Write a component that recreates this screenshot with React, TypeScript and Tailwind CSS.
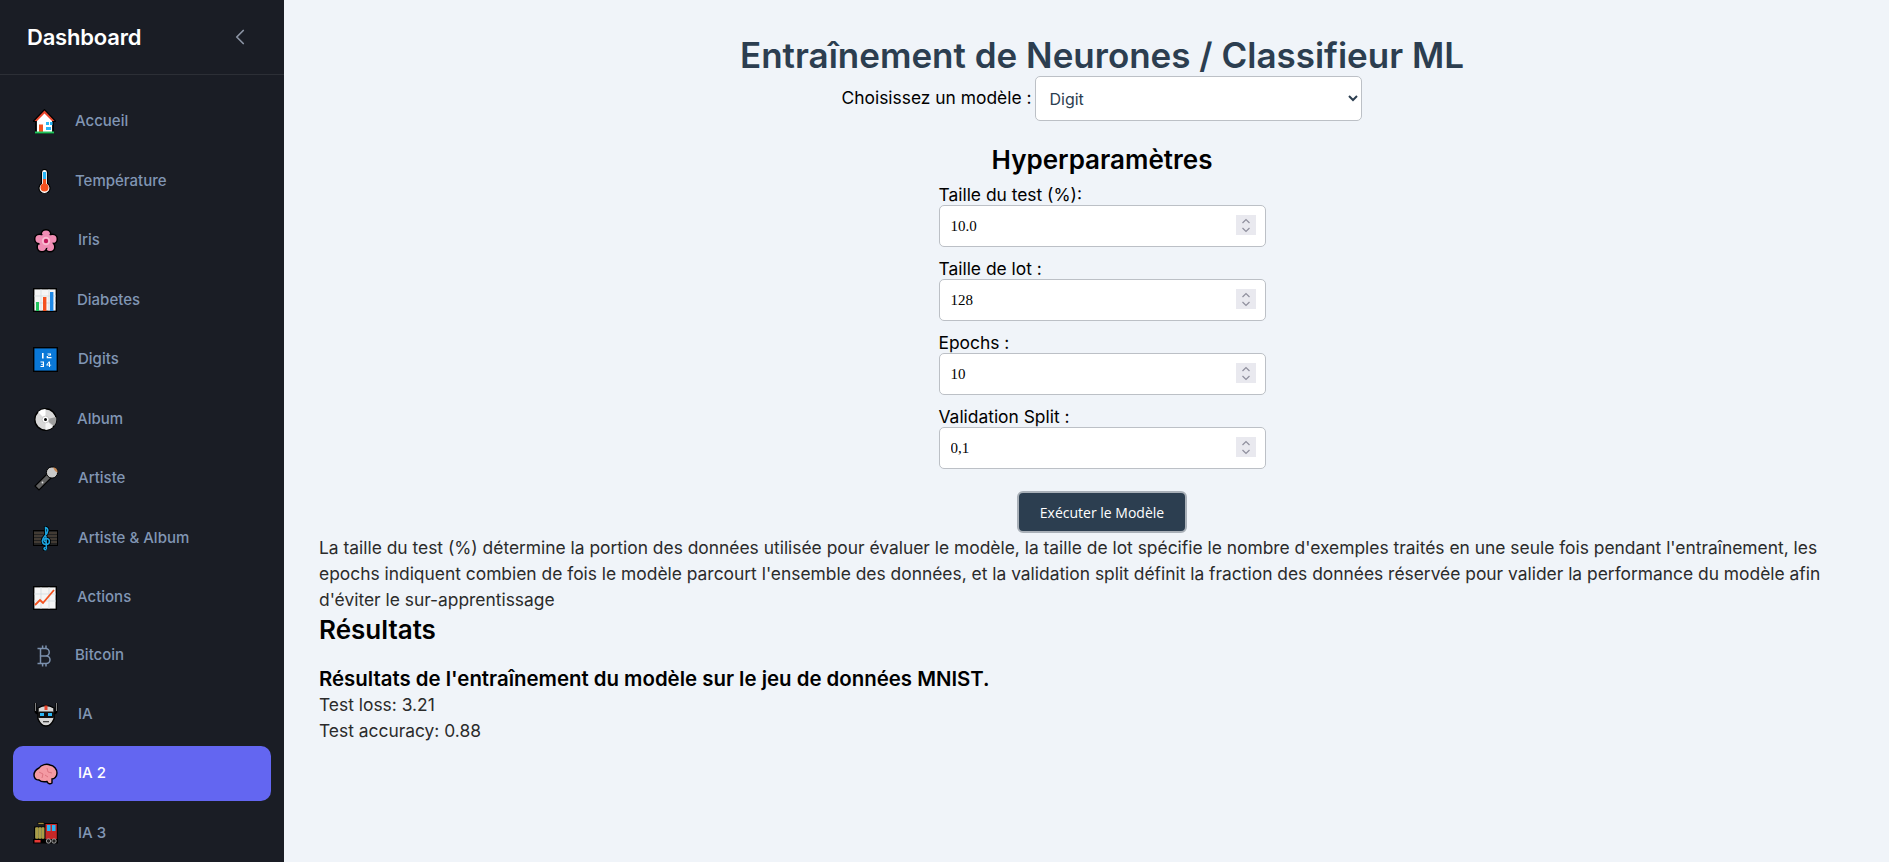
import React from "react";
import { ChevronLeft } from "lucide-react";

const House = () => (
  <svg width="23" height="25" viewBox="0 0 23 25">
    <path d="M11.5 1 L22 12 L20 12 L20 24 L3 24 L3 12 L1 12 Z" fill="#fff" stroke="#000" strokeWidth="1.8" />
    <path d="M11.5 1.5 L21.5 12 L19 12 L11.5 4.5 L4 12 L1.5 12 Z" fill="#e8452c" />
    <rect x="6" y="15.5" width="4" height="7.5" fill="#f4511e" />
    <rect x="13" y="13" width="3" height="3" fill="#29b6f6" />
    <rect x="17" y="13" width="2.5" height="3" fill="#29b6f6" />
    <rect x="13" y="18" width="5" height="3" fill="#29b6f6" />
    <rect x="2" y="22.5" width="19" height="2" fill="#22c55e" />
  </svg>
);
const Thermo = () => (
  <svg width="13" height="24" viewBox="0 0 13 24">
    <path d="M3.5 14.5 V3.5 a3 3 0 0 1 6 0 V14.5 a5.5 5.5 0 1 1 -6 0 Z" fill="#fff" stroke="#000" strokeWidth="1.2" />
    <rect x="5" y="3" width="3" height="7" fill="#29b6f6" />
    <rect x="5" y="10" width="3" height="7" fill="#f4511e" />
    <circle cx="6.5" cy="18.5" r="4" fill="#f4511e" />
  </svg>
);
const Flower = () => (
  <svg width="24" height="24" viewBox="0 0 24 24">
    <g stroke="#000" strokeWidth="1.5" fill="#f08db4">
      <circle cx="12" cy="5.5" r="4.8" />
      <circle cx="18.5" cy="10" r="4.8" />
      <circle cx="16" cy="18" r="4.8" />
      <circle cx="8" cy="18" r="4.8" />
      <circle cx="5.5" cy="10" r="4.8" />
    </g>
    <circle cx="12" cy="12" r="7" fill="#f08db4" />
    <circle cx="12" cy="12" r="4.2" fill="#f8bbd0" />
    <circle cx="12" cy="12" r="2.2" fill="#c2185b" />
  </svg>
);
const Bars = () => (
  <svg width="24" height="24" viewBox="0 0 24 24">
    <rect x="0.7" y="0.7" width="22.6" height="22.6" fill="#f5f5f5" stroke="#000" strokeWidth="1.4" />
    <path d="M1 8h22M1 15h22M8 1v22M16 1v22" stroke="#cfd8dc" strokeWidth="0.7" />
    <rect x="3" y="14" width="3" height="9" fill="#22c55e" />
    <rect x="10" y="9" width="3.4" height="14" fill="#f4511e" />
    <rect x="17" y="4" width="3.4" height="19" fill="#1e88e5" />
  </svg>
);
const Digits = () => (
  <svg width="25" height="25" viewBox="0 0 25 25">
    <rect x="0.7" y="0.7" width="23.6" height="23.6" fill="#0a78d8" stroke="#000" strokeWidth="1.4" />
    <rect x="9" y="6" width="1.6" height="5.5" fill="#fff" />
    <path d="M14.5 6.5h3.5v2h-3v1.5h3.5v1.2h-4.8V9h3V7.6h-2.2z" fill="#fff" />
    <path d="M7.5 14.5h3.5v5.5H7.5v-1h2.3v-1.2H8v-.9h1.8v-1.3H7.5z" fill="#fff" />
    <path d="M17 14.5v3.2h1.2v.9H17V20h-1v-1.4h-2.6v-.9l2.4-3.2zM14.5 17.7H16v-2z" fill="#fff" />
  </svg>
);
const Disc = () => (
  <svg width="23" height="23" viewBox="0 0 23 23">
    <circle cx="11.5" cy="11.5" r="10.7" fill="#d8d8d8" stroke="#000" strokeWidth="1.4" />
    <path d="M11.5 11.5 L4 4 A10.5 10.5 0 0 1 11.5 1 Z" fill="#fff" />
    <path d="M11.5 11.5 L19 19 A10.5 10.5 0 0 1 11.5 22 Z" fill="#f5f5f5" />
    <path d="M11.5 11.5 L22 9 A10.5 10.5 0 0 1 20 18 Z" fill="#9e9e9e" />
    <circle cx="11.5" cy="11.5" r="3.4" fill="#fff" stroke="#bdbdbd" strokeWidth="0.8" />
    <circle cx="11.5" cy="11.5" r="1.5" fill="#000" />
  </svg>
);
const Mic = () => (
  <svg width="25" height="25" viewBox="0 0 25 25">
    <path d="M14 7 L18 11 L5 24 L1 20 Z" fill="#616161" stroke="#000" strokeWidth="1.2" />
    <circle cx="8.5" cy="16.5" r="0.9" fill="#e0e0e0" />
    <circle cx="18" cy="6.5" r="5.6" fill="#c9c9c9" stroke="#000" strokeWidth="1" />
    <path d="M19 1.2 a5.4 5.4 0 0 1 4.6 5.6 L21 5 Z" fill="#c98a55" />
  </svg>
);
const Music = () => (
  <svg width="25" height="25" viewBox="0 0 25 25">
    <rect x="0.5" y="4.5" width="24" height="15" fill="#222" stroke="#000" />
    <path d="M1 7h23M1 10h23M1 13h23M1 16h23" stroke="#6b5b4d" strokeWidth="0.9" />
    <path d="M13.5 23.5 C11 24.5 10 21.5 12.5 21.5 M13.5 23 L12.5 1.5 C15.5 2 16 6 11.5 10.5 C8 14 9 18.5 13 18.5 C17.5 18.5 17.5 12.5 13 12.5 C10.5 12.5 10.5 15.5 12.5 16" fill="none" stroke="#000" strokeWidth="3.2" />
    <path d="M13.5 23.5 C11 24.5 10 21.5 12.5 21.5 M13.5 23 L12.5 1.5 C15.5 2 16 6 11.5 10.5 C8 14 9 18.5 13 18.5 C17.5 18.5 17.5 12.5 13 12.5 C10.5 12.5 10.5 15.5 12.5 16" fill="none" stroke="#1ca5e0" strokeWidth="1.5" />
  </svg>
);
const Trend = () => (
  <svg width="24" height="24" viewBox="0 0 24 24">
    <rect x="0.7" y="0.7" width="22.6" height="22.6" fill="#f5f5f5" stroke="#000" strokeWidth="1.4" />
    <path d="M1 8h22M1 15h22M8 1v22M16 1v22" stroke="#cfd8dc" strokeWidth="0.7" />
    <path d="M2 19 L7 14 L10 17 L21 4" fill="none" stroke="#f4511e" strokeWidth="1.8" />
  </svg>
);
const Btc = () => (
  <svg width="14" height="22" viewBox="0 0 14 22" fill="none" stroke="#7b90ad" strokeWidth="1.5">
    <path d="M2.7 3.5 H8.5 a3.7 3.7 0 0 1 0 7.5 H2.7 M2.7 11 H9.2 a3.8 3.8 0 0 1 0 7.6 H2.7 M3.5 3.5 V18.6 M0.5 3.5 H3.5 M0.5 18.6 H3.5 M5.6 0.5 V3.5 M9 0.5 V3.5 M5.6 18.6 V21.6 M9 18.6 V21.6" />
  </svg>
);
const Robot = () => (
  <svg width="24" height="25" viewBox="0 0 24 25">
    <path d="M1.5 1 V9 C1.5 11 3.5 11.5 4 11 M22.5 1 V9 C22.5 11 20.5 11.5 20 11" fill="none" stroke="#000" strokeWidth="2.2" />
    <path d="M1.5 1 V9 M22.5 1 V9" stroke="#8d8d8d" strokeWidth="0.9" />
    <path d="M4 6 Q12 1 20 6 L20 17 Q17 24 12 24 Q7 24 4 17 Z" fill="#d6d6d6" stroke="#000" strokeWidth="1.4" />
    <rect x="10.5" y="3.5" width="3" height="4.5" fill="#e8452c" />
    <rect x="4" y="9.5" width="16" height="6.5" rx="1.5" fill="#111" />
    <rect x="6" y="11" width="4" height="3" fill="#29b6f6" />
    <rect x="14" y="11" width="4" height="3" fill="#29b6f6" />
    <rect x="9" y="19" width="6" height="1.3" fill="#444" />
  </svg>
);
const Brain = () => (
  <svg width="25" height="22" viewBox="0 0 25 22">
    <path d="M1 12 C1 8 4 6 6 5 C8 1.5 14 0.5 17 2 C21 2.5 24 6 24 10 C24 14 21 16 19 16 L19 20 C17 21.5 14.5 20.5 14 18.5 C11 19 8 19 6 17 C3 17 1 15 1 12 Z" fill="#f49aa3" stroke="#000" strokeWidth="1.4" />
    <path d="M6 9 L10 11 L9 15 M14 5 L15 9 L19 10 M12 12 L15 14" fill="none" stroke="#d96f7c" strokeWidth="0.9" />
  </svg>
);
const Train = () => (
  <svg width="25" height="22" viewBox="0 0 25 22">
    <rect x="5" y="0.5" width="6" height="2" fill="#a08a3c" stroke="#000" strokeWidth="0.6" />
    <rect x="1.5" y="5" width="11" height="12" fill="#8d8b4f" stroke="#000" strokeWidth="1" />
    <path d="M4 5v12M7 5v12M10 5v12" stroke="#c9b03c" strokeWidth="1" />
    <rect x="12" y="1.5" width="12.3" height="16" fill="#c62828" stroke="#000" strokeWidth="1" />
    <rect x="14" y="3" width="3.5" height="6" fill="#29b6f6" />
    <rect x="19" y="3" width="3.5" height="6" fill="#29b6f6" />
    <rect x="0" y="17" width="25" height="4.5" fill="#000" />
    <rect x="1.5" y="18" width="6" height="2.5" fill="#e53935" />
    <circle cx="15.5" cy="19" r="2.2" fill="#222" stroke="#bbb" strokeWidth="0.8" />
    <circle cx="21" cy="19" r="2.2" fill="#222" stroke="#bbb" strokeWidth="0.8" />
  </svg>
);

const items = [
  { label: "Accueil", Icon: House, box: "w-[42px]", h: "h-[55px] mb-[4.5px]" },
  { label: "Température", Icon: Thermo, box: "w-[42px] pl-[5px]", h: "h-[55px] mb-[4.5px]" },
  { label: "Iris", Icon: Flower, box: "w-[45px] pl-[1px]", h: "h-[55px] mb-[4.5px]" },
  { label: "Diabetes", Icon: Bars, box: "w-[44px]", h: "h-[55px] mb-[4.5px]" },
  { label: "Digits", Icon: Digits, box: "w-[45px]", h: "h-[55px] mb-[4.5px]" },
  { label: "Album", Icon: Disc, box: "w-[44px] pl-[1px]", h: "h-[55px] mb-[4.5px]" },
  { label: "Artiste", Icon: Mic, box: "w-[45px] pl-[1px]", h: "h-[55px] mb-[4.5px]" },
  { label: "Artiste & Album", Icon: Music, box: "w-[45px]", h: "h-[55px] mb-[4.5px]" },
  { label: "Actions", Icon: Trend, box: "w-[44px]", h: "h-[55px] mb-[4.5px]" },
  { label: "Bitcoin", Icon: Btc, box: "w-[42px] pl-[4px]", h: "h-[52px] mb-[5px]" },
  { label: "IA", Icon: Robot, box: "w-[45px] pl-[1px]", h: "h-[55px] mb-[4.5px]" },
  { label: "IA 2", Icon: Brain, box: "w-[45px]", h: "h-[55px] mb-[4.5px]", active: true },
  { label: "IA 3", Icon: Train, box: "w-[45px]", h: "h-[55px] mb-[4.5px]" },
];

function Spinner() {
  return (
    <div className="absolute right-[10px] top-[10px] flex h-[20px] w-[20px] items-center justify-center bg-[#e9e9ef]">
      <svg width="10" height="15" viewBox="0 0 10 15" fill="none" stroke="#8f8f9d" strokeWidth="1.2">
        <path d="M1.5 5 L5 1.5 L8.5 5 M1.5 10 L5 13.5 L8.5 10" />
      </svg>
    </div>
  );
}

function Field({ label, value, mb }: { label: string; value: string; mb: string }) {
  return (
    <div className={`flex w-[327px] flex-col ${mb}`}>
      <label className="text-[17.4px] leading-[20px] text-black">{label}</label>
      <div className="relative h-[42px]">
        <input
          readOnly
          value={value}
          className="h-full w-full rounded-[5px] border border-[#bcc0c6] bg-white pl-[11px] text-[15px] text-black outline-none [font-family:'Liberation_Serif',serif]"
        />
        <Spinner />
      </div>
    </div>
  );
}

export default function App() {
  return (
    <div className="flex h-screen overflow-hidden bg-[#f0f4f9] [font-family:Inter,sans-serif]">
      <aside className="flex w-[284px] shrink-0 flex-col overflow-hidden bg-[#1a1d25]">
        <div className="flex h-[75px] shrink-0 items-center justify-between border-b border-[#2c2f36] pl-[27px] pr-[31px]">
          <span className="text-[22px] font-semibold tracking-[-0.2px] text-white">Dashboard</span>
          <ChevronLeft size={26} color="#8b93a3" strokeWidth={1.6} />
        </div>
        <nav className="flex flex-col px-[13px] pt-[19px]">
          {items.map(({ label, Icon, box, h, active }) => (
            <div
              key={label}
              className={`flex shrink-0 items-center rounded-[10px] pl-[20px] text-[15px] font-medium ${h} ${
                active ? "bg-[#6366f1] text-white" : "text-[#8196b4]"
              }`}
            >
              <span className={`flex shrink-0 items-center ${box}`}>
                <Icon />
              </span>
              <span>{label}</span>
            </div>
          ))}
        </nav>
      </aside>
      <main className="flex min-w-0 flex-1 flex-col pl-[35px] pr-[4px] pt-[35px]">
        <h1 className="text-center text-[35px] font-semibold leading-[41px] text-[#2c3e50]">
          Entraînement de Neurones / Classifieur ML
        </h1>
        <div className="flex items-center justify-center gap-[4px]">
          <label className="text-[17.4px] text-black">Choisissez un modèle :</label>
          <select className="h-[45px] w-[327px] rounded-[5px] border border-[#bcc0c6] bg-white pl-[9px] text-[16px] text-[#2c3e50] outline-none">
            <option>Digit</option>
          </select>
        </div>
        <h2 className="mt-[23px] text-center text-[26px] font-semibold leading-[32px] text-black">Hyperparamètres</h2>
        <div className="flex flex-col items-center pt-[9px]">
          <Field label="Taille du test (%):" value="10.0" mb="mb-[12px]" />
          <Field label="Taille de lot :" value="128" mb="mb-[12px]" />
          <Field label="Epochs :" value="10" mb="mb-[12px]" />
          <Field label="Validation Split :" value="0,1" mb="mb-[0px]" />
          <button className="mt-[22px] h-[42px] w-[170px] rounded-[6px] border-2 border-[#a9b0b8] bg-[#2c3e50] text-[14px] text-white [font-family:'Open_Sans',sans-serif]">
            Exécuter le Modèle
          </button>
        </div>
        <p className="mt-[2px] pr-[50px] text-[17.4px] leading-[26px] text-[#2b2b2b]">
          La taille du test (%) détermine la portion des données utilisée pour évaluer le modèle, la taille de lot spécifie le nombre d'exemples traités en une seule fois pendant l'entraînement, les epochs indiquent combien de fois le modèle parcourt l'ensemble des données, et la validation split définit la fraction des données réservée pour valider la performance du modèle afin d'éviter le sur-apprentissage
        </p>
        <h3 className="text-[26px] font-semibold leading-[34px] text-black">Résultats</h3>
        <p className="mt-[19px] text-[20.4px] font-semibold leading-[26px] text-black">
          Résultats de l'entraînement du modèle sur le jeu de données MNIST.
        </p>
        <p className="text-[17.4px] leading-[26px] text-[#2b2b2b]">Test loss: 3.21</p>
        <p className="text-[17.4px] leading-[26px] text-[#2b2b2b]">Test accuracy: 0.88</p>
      </main>
    </div>
  );
}
